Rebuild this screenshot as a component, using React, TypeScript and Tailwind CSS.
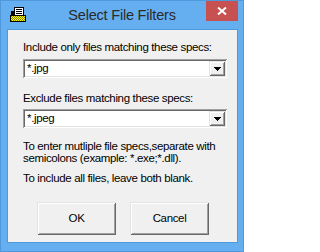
import React from "react";

const sunken =
  "shadow-[inset_1px_1px_0_#a0a0a0,inset_-1px_-1px_0_#ffffff,inset_2px_2px_0_#696969,inset_-2px_-2px_0_#e3e3e3]";
const raised =
  "shadow-[inset_1px_1px_0_#e3e3e3,inset_-1px_-1px_0_#696969,inset_2px_2px_0_#ffffff,inset_-2px_-2px_0_#a0a0a0]";

function AppIcon() {
  return (
    <svg width="16" height="15" viewBox="0 0 16 15" shapeRendering="crispEdges">
      <defs>
        <pattern id="dither" width="2" height="2" patternUnits="userSpaceOnUse">
          <rect width="2" height="2" fill="#ffff00" />
          <rect width="1" height="1" fill="#808000" />
          <rect x="1" y="1" width="1" height="1" fill="#808000" />
        </pattern>
      </defs>
      <rect x="1" y="4" width="3" height="5" fill="#000" />
      <rect x="4.5" y="0.5" width="9" height="9" fill="#fff" stroke="#000" />
      <rect x="6" y="2" width="6" height="1" fill="#000" />
      <rect x="6" y="4" width="6" height="1" fill="#000" />
      <rect x="6" y="6" width="6" height="1" fill="#000" />
      <rect x="0.5" y="8.5" width="15" height="6" fill="url(#dither)" stroke="#000" />
    </svg>
  );
}

function Combo({ value }: { value: string }) {
  return (
    <div className={`flex h-[19px] w-[204px] bg-white p-[2px] ${sunken}`}>
      <div className="flex flex-1 items-center pl-[2px] leading-[15px]">{value}</div>
      <div className={`flex h-[15px] w-[16px] items-center justify-center bg-[#f0f0f0] ${raised}`}>
        <svg width="7" height="4" viewBox="0 0 7 4" shapeRendering="crispEdges">
          <path d="M0 0h7v1h-1v1h-1v1h-1v1h-1v-1h-1v-1h-1v-1h-1z" fill="#000" />
        </svg>
      </div>
    </div>
  );
}

function Button({ label }: { label: string }) {
  return (
    <div className={`flex h-[33px] w-[79px] items-center justify-center bg-[#f0f0f0] ${raised}`}>
      {label}
    </div>
  );
}

export default function App() {
  return (
    <div className="flex h-[252px] w-[244px] flex-col border border-[#4f98dc] bg-[#65aef0] font-['Liberation_Sans',Arial,sans-serif]">
      {/* Title bar */}
      <div className="grid h-[28px] grid-cols-[1fr_auto_1fr]">
        <div className="pl-[9px] pt-[6px]">
          <AppIcon />
        </div>
        <div className="pt-[6px] text-[14.5px] leading-[17px] tracking-[-0.2px] text-[#2b2b2b]">
          Select File Filters
        </div>
        <div className="flex justify-end pr-[5px]">
          <div className="flex h-[20px] w-[32px] items-center justify-center bg-[#c75050]">
            <svg width="10" height="8" viewBox="0 0 10 8">
              <path d="M1 0.5L9 7.5M9 0.5L1 7.5" stroke="#fff" strokeWidth="2" />
            </svg>
          </div>
        </div>
      </div>

      {/* Dialog body */}
      <div className="mb-[8px] ml-[6px] mr-[5px] flex flex-1 flex-col border border-[#4f98dc] bg-[#f0f0f0] pl-[15px] text-[11.5px] leading-[13px] tracking-[-0.35px] text-black">
        <p className="pt-[11px]">Include only files matching these specs:</p>
        <div className="mt-[5px]">
          <Combo value="*.jpg" />
        </div>
        <p className="mt-[14px]">Exclude files matching these specs:</p>
        <div className="mt-[4px]">
          <Combo value="*.jpeg" />
        </div>
        <p className="mt-[12px] leading-[12px]">
          To enter mutliple file specs,separate with
          <br />
          semicolons (example: *.exe;*.dll).
        </p>
        <p className="mt-[8px] leading-[12px]">To include all files, leave both blank.</p>
        <div className="ml-[14px] mt-[18px] flex gap-[14px]">
          <Button label="OK" />
          <Button label="Cancel" />
        </div>
      </div>
    </div>
  );
}
